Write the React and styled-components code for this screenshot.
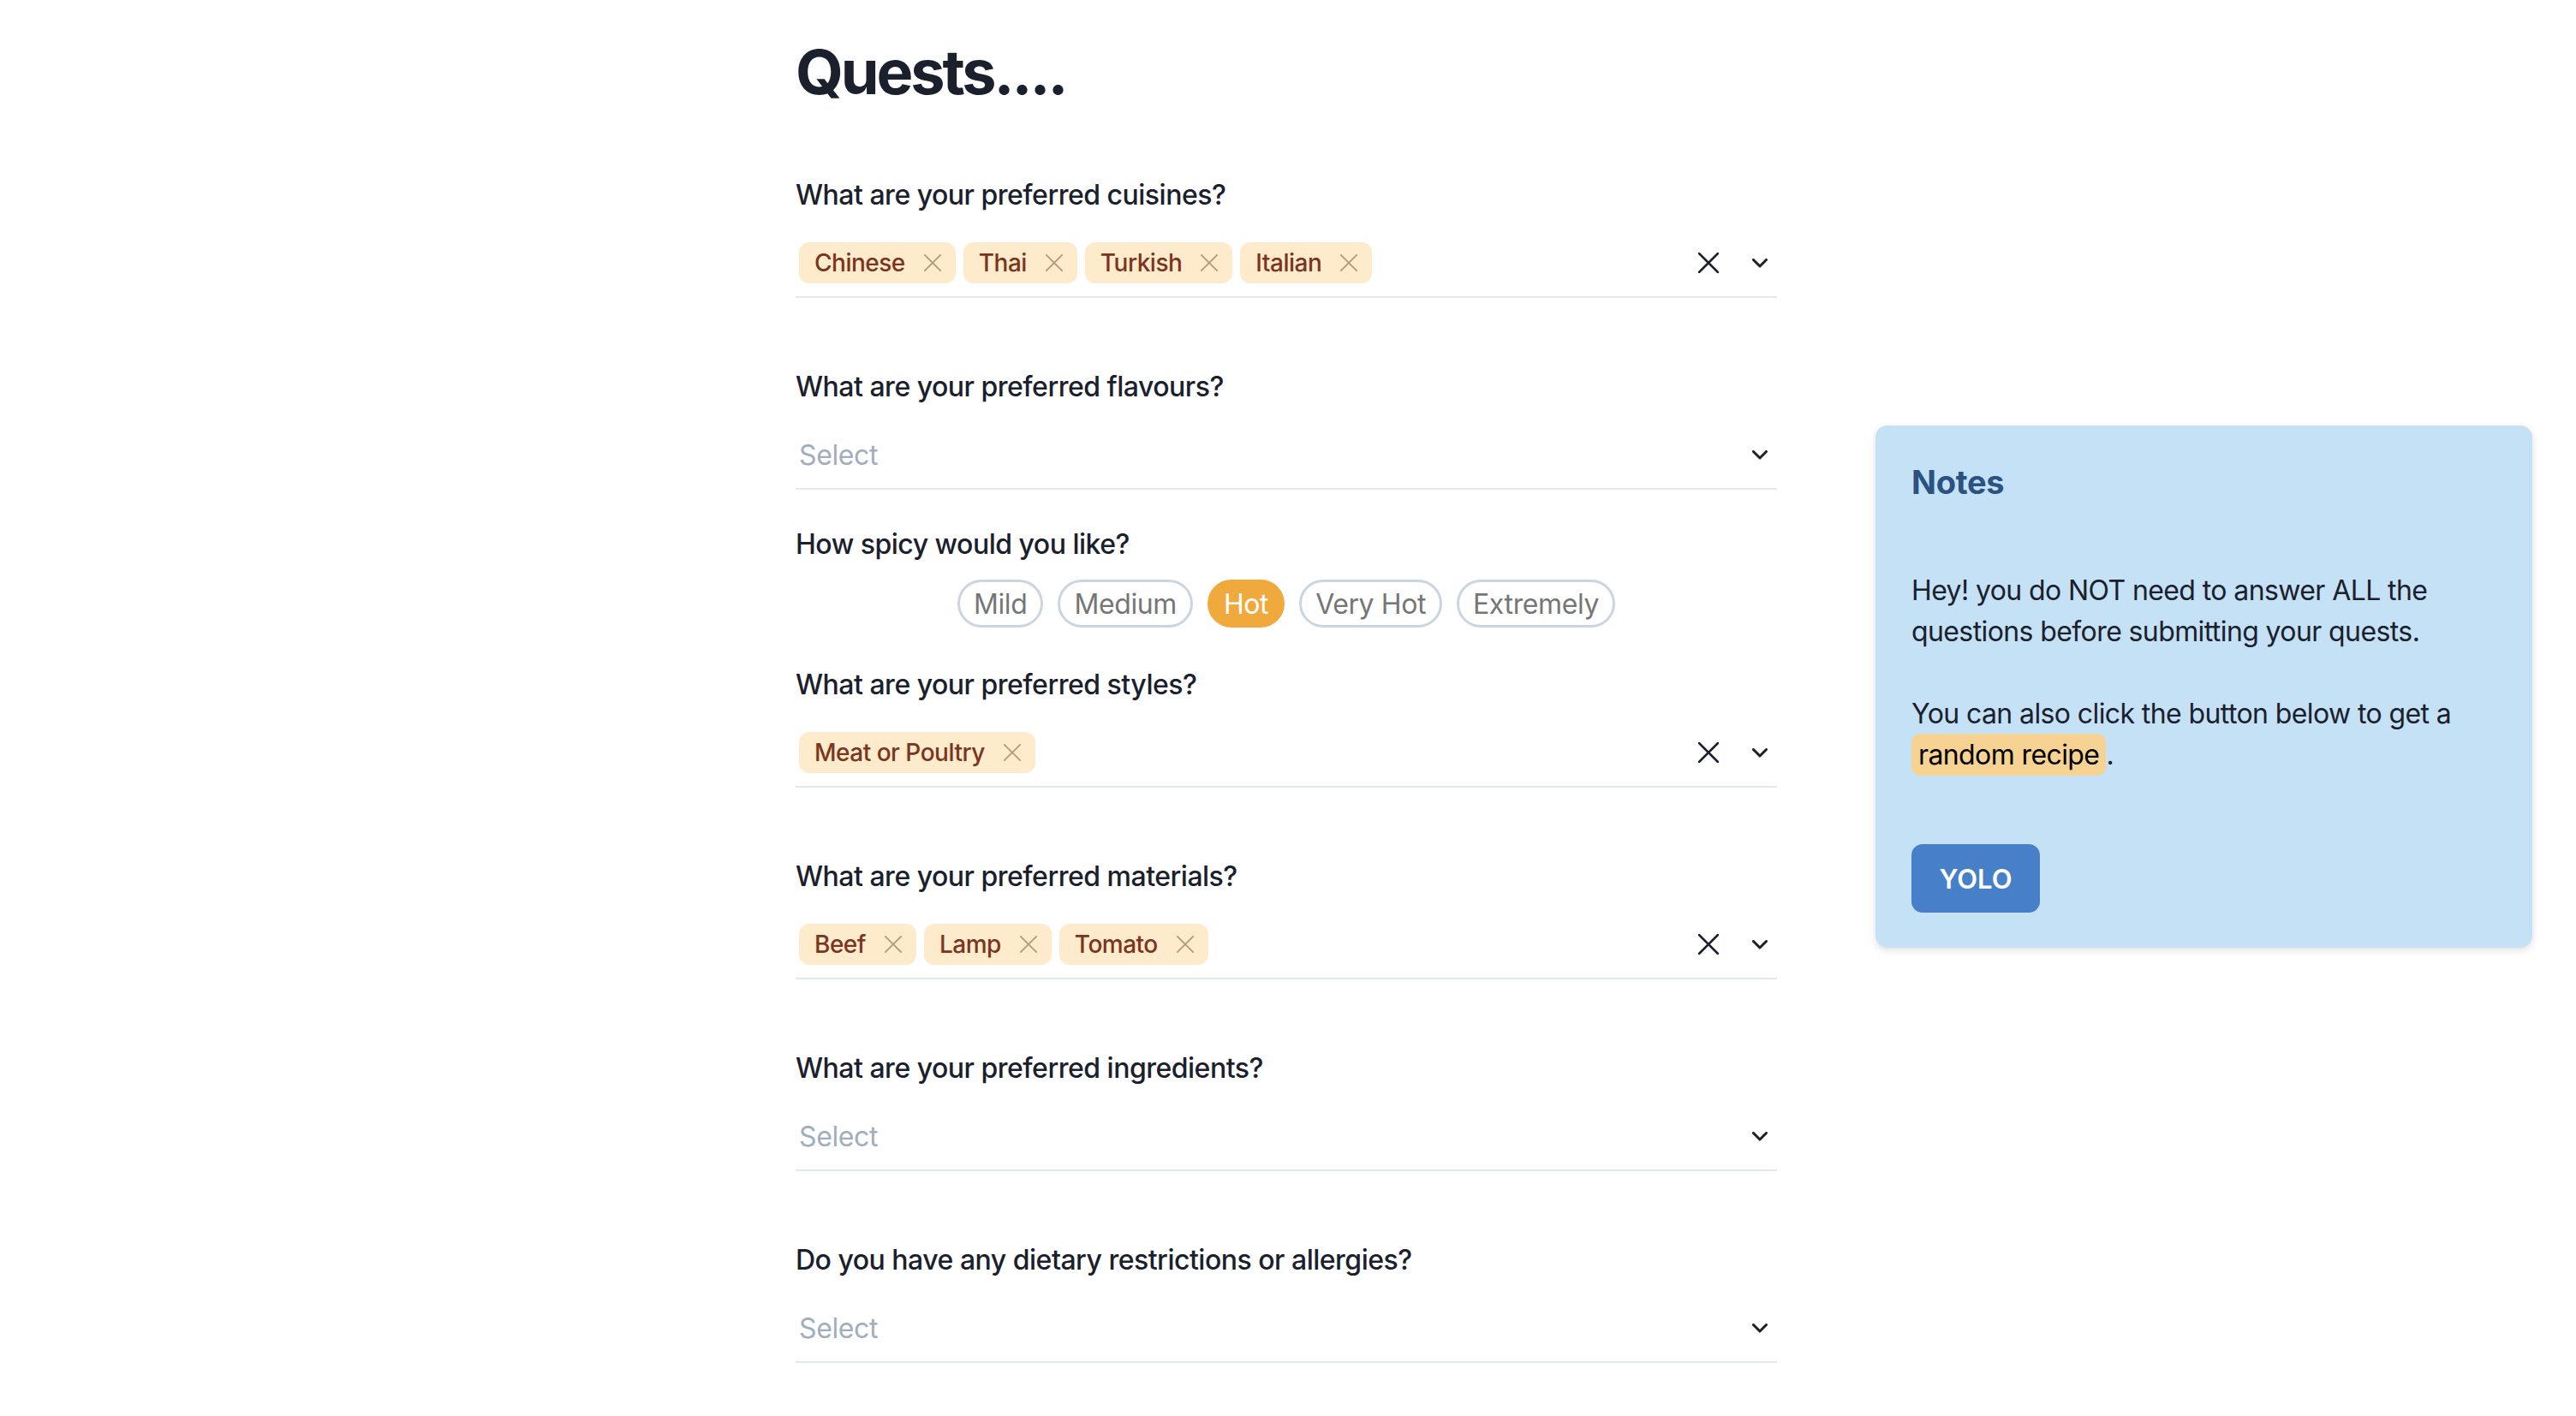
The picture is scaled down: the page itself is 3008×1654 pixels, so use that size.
import styled, { createGlobalStyle } from 'styled-components'

const GlobalStyle = createGlobalStyle`
  * { box-sizing: border-box; }
  body {
    margin: 0;
    background: #ffffff;
    font-family: Inter, "Liberation Sans", sans-serif;
    color: #1a202c;
  }
`

const questions = [
  { label: 'What are your preferred cuisines?', values: ['Chinese', 'Thai', 'Turkish', 'Italian'], gap: 80 },
  { label: 'What are your preferred flavours?', values: [], gap: 40 },
  { label: 'How spicy would you like?', spicy: true, gap: 43 },
  { label: 'What are your preferred styles?', values: ['Meat or Poultry'], gap: 80 },
  { label: 'What are your preferred materials?', values: ['Beef', 'Lamp', 'Tomato'], gap: 80 },
  { label: 'What are your preferred ingredients?', values: [], gap: 80 },
  { label: 'Do you have any dietary restrictions or allergies?', values: [], gap: 40 },
]

const levels = ['Mild', 'Medium', 'Hot', 'Very Hot', 'Extremely']

const CloseIcon = ({ size = 24, color = '#1a202c', width = 2.5 }) => (
  <svg width={size} height={size} viewBox="0 0 24 24" fill="none">
    <path d="M1 1L23 23M23 1L1 23" stroke={color} strokeWidth={width} strokeLinecap="round" />
  </svg>
)

const Chevron = () => (
  <svg width="18" height="11" viewBox="0 0 18 11" fill="none">
    <path d="M1.5 1.5L9 9L16.5 1.5" stroke="#1a202c" strokeWidth="3" strokeLinecap="round" strokeLinejoin="round" />
  </svg>
)

const App = () => {
  return (
    <>
      <GlobalStyle />
      <Page>
        <Main>
          <Title>Quests....</Title>
          {questions.map((q) => (
            <Field key={q.label} $gap={q.gap}>
              <Label $tight={q.spicy}>{q.label}</Label>
              {q.spicy ? (
                <PillRow>
                  {levels.map((l) => (
                    <Pill key={l} $active={l === 'Hot'}>{l}</Pill>
                  ))}
                </PillRow>
              ) : (
                <Control>
                  <Values>
                    {q.values.length === 0 && <Placeholder>Select</Placeholder>}
                    {q.values.map((v) => (
                      <Tag key={v}>
                        {v}
                        <CloseIcon size={20} color="#b9977f" width={2.2} />
                      </Tag>
                    ))}
                  </Values>
                  <Indicators>
                    {q.values.length > 0 && <CloseIcon />}
                    <Chevron />
                  </Indicators>
                </Control>
              )}
            </Field>
          ))}
        </Main>
        <Notes>
          <NotesTitle>Notes</NotesTitle>
          <NotesText>Hey! you do NOT need to answer ALL the questions before submitting your quests.</NotesText>
          <NotesText>
            You can also click the button below to get a <Mark>random recipe</Mark>.
          </NotesText>
          <Yolo>YOLO</Yolo>
        </Notes>
      </Page>
    </>
  )
}

const Page = styled.div`
  display: flex;
  align-items: flex-start;
  gap: 115px;
  padding: 41px 51px 0 929px;
`
const Main = styled.div`
  width: 1146px;
  flex-shrink: 0;
  display: flex;
  flex-direction: column;
`
const Title = styled.h1`
  margin: 0 0 77px;
  font-size: 72px;
  line-height: 86px;
  font-weight: 700;
  color: #1a202c;
  letter-spacing: -3.1px;
`
const Field = styled.div`
  margin-bottom: ${(p) => p.$gap}px;
`
const Label = styled.div`
  font-size: 32px;
  line-height: 48px;
  font-weight: 500;
  color: #1a202c;
  letter-spacing: -0.5px;
  margin-bottom: ${(p) => (p.$tight ? '17px' : '16px')};
`
const Control = styled.div`
  height: 80px;
  display: flex;
  align-items: center;
  border-bottom: 2px solid #e2e8f0;
  padding-right: 11px;
`
const Values = styled.div`
  flex: 1;
  display: flex;
  align-items: center;
  gap: 9px;
  padding-left: 4px;
`
const Placeholder = styled.span`
  font-size: 32px;
  color: #a0aec0;
  letter-spacing: -0.4px;
`
const Tag = styled.span`
  display: inline-flex;
  align-items: center;
  gap: 22px;
  height: 48px;
  padding: 0 17px 0 18px;
  border-radius: 12px;
  background: #fdebcb;
  color: #7b341e;
  font-size: 28px;
  font-weight: 500;
  letter-spacing: -0.5px;
`
const Indicators = styled.div`
  display: flex;
  align-items: center;
  gap: 39px;
`
const PillRow = styled.div`
  display: flex;
  justify-content: center;
  gap: 17px;
`
const Pill = styled.button`
  height: 56px;
  padding: 0 16px;
  border-radius: 999px;
  border: 3px solid ${(p) => (p.$active ? '#f0a93c' : '#cbd5e0')};
  background: ${(p) => (p.$active ? '#f0a93c' : '#ffffff')};
  color: ${(p) => (p.$active ? '#ffffff' : '#767676')};
  font-family: Inter, "Liberation Sans", sans-serif;
  font-size: 32px;
  font-weight: 400;
  letter-spacing: -0.4px;
`
const Notes = styled.aside`
  width: 767px;
  flex-shrink: 0;
  margin-top: 456px;
  padding: 42px 42px 41px;
  background: #c5e1f6;
  border-radius: 14px;
  box-shadow: 0 3px 10px rgba(0, 0, 0, 0.12);
`
const NotesTitle = styled.h2`
  margin: 0 0 79px;
  font-size: 38px;
  line-height: 48px;
  font-weight: 700;
  color: #2c5282;
  letter-spacing: -0.3px;
`
const NotesText = styled.p`
  margin: 0 0 48px;
  font-size: 32px;
  line-height: 48px;
  color: #1a202c;
  letter-spacing: -0.6px;
  &:last-of-type { margin-bottom: 80px; }
`
const Mark = styled.span`
  background: #f6d393;
  color: #000;
  padding: 5px 8px;
  border-radius: 10px;
`
const Yolo = styled.button`
  display: block;
  width: 150px;
  height: 80px;
  border: none;
  border-radius: 13px;
  background: #4780c8;
  color: #ffffff;
  font-family: Inter, "Liberation Sans", sans-serif;
  font-size: 31px;
  font-weight: 600;
`

export default App
